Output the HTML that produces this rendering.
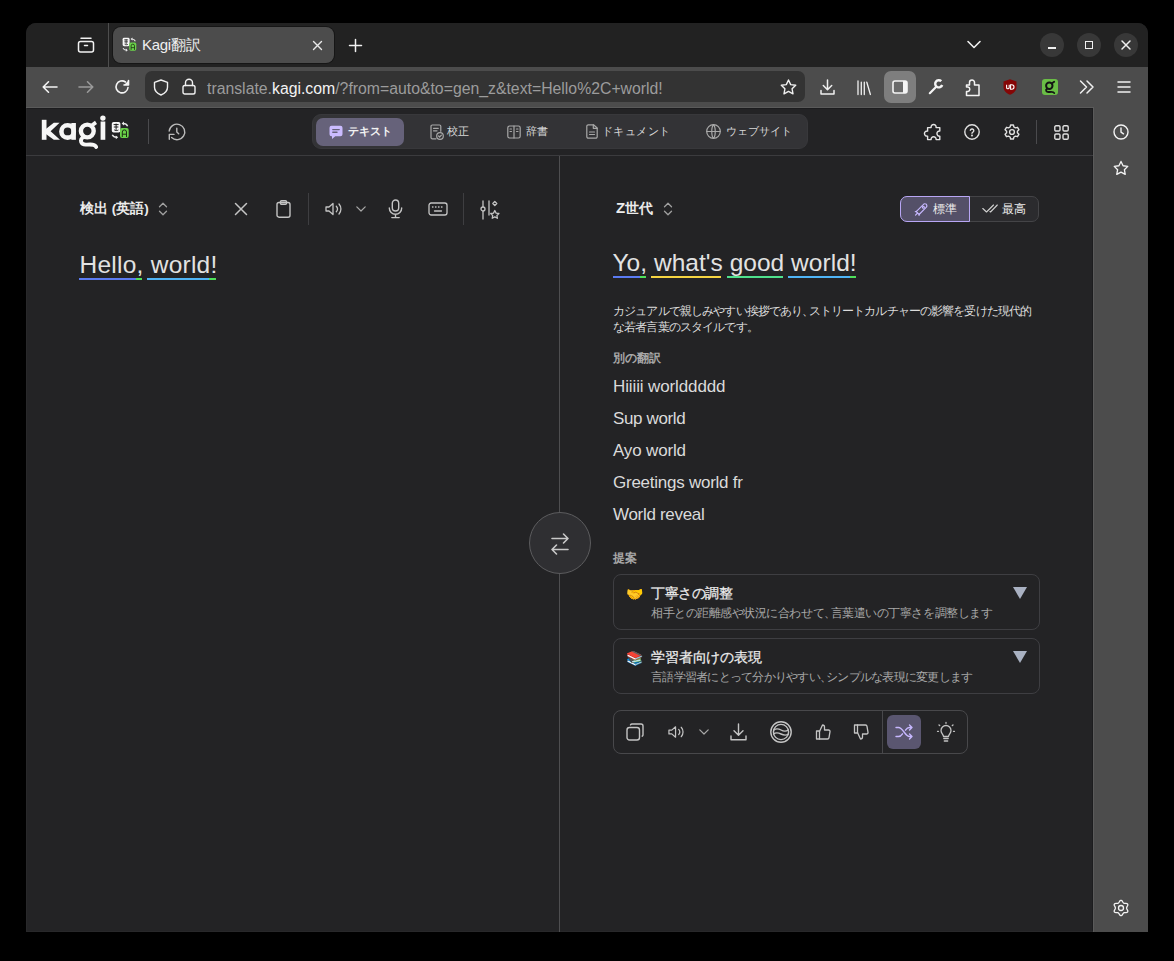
<!DOCTYPE html>
<html><head><meta charset="utf-8">
<style>
*{margin:0;padding:0;box-sizing:border-box}
html,body{width:1174px;height:961px;background:#000;overflow:hidden}
body{font-family:"Liberation Sans",sans-serif;color:#e6e6e6;position:relative}
.a{position:absolute}
svg{display:block;overflow:visible}
.ic{stroke:currentColor;fill:none;stroke-width:1.5;stroke-linecap:round;stroke-linejoin:round}
.t{white-space:nowrap;line-height:1}
</style></head><body>
<!-- window frame -->
<div class="a" style="left:26px;top:23px;width:1122px;height:909px;background:#232325;border-radius:10px 10px 0 0;overflow:hidden">
  <div class="a" style="left:0;top:0;width:1122px;height:44px;background:#222222"></div>
  <div class="a" style="left:0;top:44px;width:1122px;height:865px;background:#4c4c4c"></div>
  <div class="a" style="left:0;top:84px;width:1068px;height:825px;background:#232325;border-top:1px solid #5a5a5a;border-right:1px solid #5a5a5a"></div>
  <div class="a" style="left:0;top:85px;width:1067px;height:1px;background:#1c1c1e"></div>
  <div class="a" style="left:1066px;top:85px;width:1px;height:824px;background:#1c1c1e"></div>
</div>

<div class="a" style="left:26px;top:108px;width:1px;height:824px;background:#28282a"></div>
<div class="a" style="left:26px;top:931px;width:1067px;height:1px;background:#28282a"></div>
<!-- TAB BAR -->
<div class="a" style="left:108px;top:23px;width:1px;height:44px;background:#4e4e4e"></div>
<!-- tab manager icon -->
<svg class="a ic" style="left:77px;top:37px;color:#f2f2f2" width="18" height="16" viewBox="0 0 18 16"><rect x="1.5" y="4.5" width="15" height="10.5" rx="2"/><path d="M4 1.2h10"/><path d="M7.5 8.5h3"/></svg>
<!-- active tab -->
<div class="a" style="left:113px;top:27px;width:221px;height:36px;background:#4c4c4c;border-radius:8px;box-shadow:0 0 0 1px #161616"></div>
<!-- favicon -->
<svg class="a" style="left:122px;top:37px" width="14.5" height="15" viewBox="73 11 18 18.6"><rect x="73.8" y="12" width="8.6" height="10.5" rx="1.8" fill="#f8f8f8"/><path d="M75.6 14.6h5M78.1 13.6v6.3M75.8 17h4.6M76.2 19.8c1 1 3 1 4.2.2" stroke="#1e1e1e" stroke-width="1" fill="none"/><rect x="82" y="17.9" width="8.7" height="10.1" rx="2" fill="#6ad24a"/><path d="M84.3 27v-5a2.1 2.1 0 0 1 4.2 0v5M84.3 24.2h4.2" stroke="#1d2e14" stroke-width="1" fill="none"/><path d="M89.6 16.2Q88.4 13.4 85 13.5" stroke="#e8e8e8" stroke-width="1.4" fill="none"/><polygon points="83.6,13.5 86,11.6 86,15.4" fill="#e8e8e8"/><path d="M74.3 24.8Q75.4 27.4 78.8 27.3" stroke="#e8e8e8" stroke-width="1.4" fill="none"/><polygon points="80.2,27.3 77.8,25.4 77.8,29.2" fill="#e8e8e8"/></svg>
<div class="a t" style="left:142px;top:37px;font-size:15px;letter-spacing:-0.3px;color:#f0f0f0">Kagi翻訳</div>
<svg class="a ic" style="left:313px;top:41px;color:#e8e8e8;stroke-width:1.4" width="9" height="9" viewBox="0 0 9 9"><path d="M.5 .5l8 8M8.5 .5l-8 8"/></svg>
<svg class="a ic" style="left:349px;top:39px;color:#f2f2f2;stroke-width:1.5" width="13" height="13" viewBox="0 0 13 13"><path d="M6.5 .5v12M.5 6.5h12"/></svg>
<!-- list all tabs chevron -->
<svg class="a ic" style="left:967px;top:40px;color:#f0f0f0;stroke-width:1.6" width="14" height="9" viewBox="0 0 14 9"><path d="M1 1.5l6 6 6-6"/></svg>
<!-- window controls -->
<div class="a" style="left:1040px;top:33px;width:24px;height:24px;border-radius:50%;background:#383838"></div>
<div class="a" style="left:1077px;top:33px;width:24px;height:24px;border-radius:50%;background:#383838"></div>
<div class="a" style="left:1114px;top:33px;width:24px;height:24px;border-radius:50%;background:#383838"></div>
<div class="a" style="left:1048px;top:47px;width:8px;height:1.5px;background:#f0f0f0"></div>
<div class="a" style="left:1085px;top:41px;width:8px;height:8px;border:1.5px solid #f0f0f0"></div>
<svg class="a ic" style="left:1122px;top:41px;color:#f0f0f0;stroke-width:1.5" width="8" height="8" viewBox="0 0 8 8"><path d="M0 0l8 8M8 0l-8 8"/></svg>

<!-- NAV BAR -->
<svg class="a ic" style="left:42px;top:81px;color:#f4f4f4;stroke-width:1.6" width="16" height="12" viewBox="0 0 16 12"><path d="M15 6H1.2M6.5 0.8L1.2 6l5.3 5.2"/></svg>
<svg class="a ic" style="left:78px;top:81px;color:#9a9a9a;stroke-width:1.6" width="16" height="12" viewBox="0 0 16 12"><path d="M1 6h13.8M9.5 0.8L14.8 6l-5.3 5.2"/></svg>
<svg class="a ic" style="left:114px;top:79px;color:#f4f4f4;stroke-width:1.6" width="16" height="16" viewBox="0 0 16 16"><path d="M14 8.5A6 6 0 1 1 11.5 3"/><path d="M14.5 1.5v4.5H10" fill="#f4f4f4"/></svg>
<!-- url bar -->
<div class="a" style="left:145px;top:71px;width:660px;height:31px;background:#333333;border-radius:7px"></div>
<svg class="a ic" style="left:153px;top:79px;color:#f0f0f0;stroke-width:1.4" width="16" height="17" viewBox="0 0 16 17"><path d="M8 1L1.5 3.3v5C1.5 12 4.5 14.6 8 16c3.5-1.4 6.5-4 6.5-7.7v-5z"/></svg>
<svg class="a ic" style="left:182px;top:78px;color:#f0f0f0;stroke-width:1.4" width="14" height="17" viewBox="0 0 14 17"><rect x="1" y="7.5" width="12" height="8.5" rx="1.8"/><path d="M3.5 7.5V4.8a3.5 3.5 0 0 1 7 0v2.7"/></svg>
<div class="a t" style="left:207px;top:80.5px;font-size:15.8px;color:#9c9c9c">translate.<span style="color:#f4f4f4">kagi.com</span>/?from=auto&amp;to=gen_z&amp;text=Hello%2C+world!</div>
<svg class="a ic" style="left:780px;top:79px;color:#f0f0f0;stroke-width:1.4" width="17" height="16" viewBox="0 0 17 16"><path d="M8.5 1l2.2 4.6 5 .7-3.6 3.5.9 5-4.5-2.4-4.5 2.4.9-5L1.3 6.3l5-.7z"/></svg>
<!-- toolbar icons -->
<svg class="a ic" style="left:820px;top:79px;color:#f0f0f0;stroke-width:1.5" width="15" height="16" viewBox="0 0 15 16"><path d="M7.5 1v9.5M3.3 6.5l4.2 4.2 4.2-4.2M1 11.5v3.5h13v-3.5"/></svg>
<svg class="a ic" style="left:857px;top:80px;color:#f0f0f0;stroke-width:1.3" width="15" height="15" viewBox="0 0 15 15"><path d="M1 1v13.5M4.3 2.2v12.3M7.3 2.2v12.3M9.8 2.2l3.6 12.3"/></svg>
<div class="a" style="left:884px;top:71px;width:32px;height:32px;background:#7e7e7e;border-radius:7px"></div>
<svg class="a" style="left:892px;top:80px" width="16" height="14" viewBox="0 0 16 14"><rect x="1" y="1" width="14" height="12" rx="2" fill="#6a6a6a"/><rect x="11" y="1" width="4" height="12" fill="#f4f4f4"/><rect x="1" y="1" width="14" height="12" rx="2" fill="none" stroke="#f4f4f4" stroke-width="1.6"/></svg>
<svg class="a" style="left:928px;top:79px" width="16" height="16" viewBox="0 0 16 16"><path d="M1.8 14.2L8 8" stroke="#f4f4f4" stroke-width="2.2" stroke-linecap="round"/><path d="M13.3 2.2A3.6 3.6 0 1 0 14.2 6" fill="none" stroke="#f4f4f4" stroke-width="2.4"/></svg>
<svg class="a ic" style="left:964px;top:77px;color:#f4f4f4;stroke-width:1.5" width="17" height="20" viewBox="0 0 17 20"><path d="M5.5 8V5.5A2.5 2.5 0 0 1 10.5 5.5V8H15V18.5H2.5V14.5H4A2.3 2.3 0 0 0 4 10H2.5V8Z"/></svg>
<svg class="a" style="left:1003px;top:79px" width="14" height="16" viewBox="0 0 14 16"><path d="M7 .3L.5 2.6v5.2C.5 11.8 3.5 14.5 7 15.8c3.5-1.3 6.5-4 6.5-8V2.6z" fill="#850606"/><path d="M3.6 5.8v2.6a1.3 1.3 0 0 0 2.6 0V5.8M7.6 5.8h1.2a2.2 2.2 0 0 1 0 4.4H7.6z" fill="none" stroke="#fff" stroke-width="1.1"/></svg>
<svg class="a" style="left:1042px;top:79px" width="16" height="16" viewBox="0 0 16 16"><rect x="0" y="0" width="16" height="16" rx="3" fill="#6abd46"/><circle cx="7.3" cy="6.8" r="3.2" fill="none" stroke="#141414" stroke-width="2"/><path d="M10 4.3l2.2-1.6" stroke="#141414" stroke-width="1.8" stroke-linecap="round"/><path d="M5.2 9.6C3.2 10.8 4 13.3 7 13s4.6-.6 5.2 1" fill="none" stroke="#141414" stroke-width="1.9" stroke-linecap="round"/></svg>

<svg class="a ic" style="left:1079px;top:80px;color:#f0f0f0;stroke-width:1.5" width="16" height="14" viewBox="0 0 16 14"><path d="M1.5 1l6 6-6 6M8 1l6 6-6 6"/></svg>
<svg class="a ic" style="left:1117px;top:81px;color:#f0f0f0;stroke-width:1.5" width="14" height="12" viewBox="0 0 14 12"><path d="M1 1h12M1 6h12M1 11h12"/></svg>

<!-- SIDEBAR icons -->
<svg class="a ic" style="left:1113px;top:124px;color:#f4f4f4;stroke-width:1.4" width="16" height="16" viewBox="0 0 16 16"><circle cx="8" cy="8" r="7"/><path d="M8 4v4.2l2.5 1.6"/></svg>
<svg class="a ic" style="left:1113px;top:160px;color:#f4f4f4;stroke-width:1.4" width="16" height="16" viewBox="0 0 17 16"><path d="M8.5 1l2.2 4.6 5 .7-3.6 3.5.9 5-4.5-2.4-4.5 2.4.9-5L1.3 6.3l5-.7z"/></svg>
<svg class="a ic" style="left:1113px;top:900px;color:#f4f4f4;stroke-width:1.3" width="16" height="16" viewBox="0 0 16 16"><path d="M8.00 0.30 L8.50 0.42 L8.96 0.74 L9.35 1.24 L9.66 1.82 L9.96 2.22 L10.24 2.60 L10.51 2.91 L10.81 3.13 L11.16 3.28 L11.56 3.36 L12.02 3.41 L12.53 3.47 L13.19 3.45 L13.81 3.54 L14.32 3.78 L14.67 4.15 L14.82 4.64 L14.76 5.20 L14.53 5.78 L14.18 6.34 L13.98 6.81 L13.80 7.24 L13.67 7.63 L13.62 8.00 L13.67 8.37 L13.80 8.76 L13.98 9.19 L14.18 9.66 L14.53 10.22 L14.76 10.80 L14.82 11.36 L14.67 11.85 L14.32 12.22 L13.81 12.46 L13.19 12.55 L12.53 12.53 L12.02 12.59 L11.56 12.64 L11.16 12.72 L10.81 12.87 L10.51 13.09 L10.24 13.40 L9.96 13.78 L9.66 14.18 L9.35 14.76 L8.96 15.26 L8.50 15.58 L8.00 15.70 L7.50 15.58 L7.04 15.26 L6.65 14.76 L6.34 14.18 L6.04 13.78 L5.76 13.40 L5.49 13.09 L5.19 12.87 L4.84 12.72 L4.44 12.64 L3.98 12.59 L3.47 12.53 L2.81 12.55 L2.19 12.46 L1.68 12.22 L1.33 11.85 L1.18 11.36 L1.24 10.80 L1.47 10.22 L1.82 9.66 L2.02 9.19 L2.20 8.76 L2.33 8.37 L2.38 8.00 L2.33 7.63 L2.20 7.24 L2.02 6.81 L1.82 6.34 L1.47 5.78 L1.24 5.20 L1.18 4.64 L1.33 4.15 L1.68 3.78 L2.19 3.54 L2.81 3.45 L3.47 3.47 L3.98 3.41 L4.44 3.36 L4.84 3.28 L5.19 3.13 L5.49 2.91 L5.76 2.60 L6.04 2.22 L6.34 1.82 L6.65 1.24 L7.04 0.74 L7.50 0.42Z"/><circle cx="8" cy="8" r="2.5"/></svg>

<!-- PAGE CONTENT -->

<!-- HEADER -->
<div class="a" style="left:26px;top:155px;width:1067px;height:1px;background:#3b3b3e"></div>
<svg class="a" style="left:38px;top:110px" width="100" height="42" viewBox="0 0 100 42" fill="#f6f6f6">
<rect x="3.8" y="9.8" width="4.7" height="20"/>
<polygon points="7.5,19.3 15.8,12.8 21.6,12.8 12.6,21.2 22,29.8 15.8,29.8 7.5,23.8"/>
<circle cx="29.6" cy="21.4" r="6.2" fill="none" stroke="#f6f6f6" stroke-width="4.6"/>
<rect x="33.3" y="13" width="4.6" height="16.8"/>
<circle cx="49.3" cy="21" r="6.4" fill="none" stroke="#f6f6f6" stroke-width="4.4"/>
<path d="M52 14.5 L57 10.8 L59 14 L55 17z"/>
<path d="M45.8 26.8 C41 29.5, 42.5 35, 48.5 34.6 C53 34.3, 57 34, 58.2 37" fill="none" stroke="#f6f6f6" stroke-width="3.8" stroke-linecap="round"/>
<rect x="62.6" y="11.5" width="4.7" height="18.3"/>
<circle cx="64.9" cy="8.1" r="2.7"/>
<rect x="73.8" y="12" width="8.6" height="10.5" rx="1.8" fill="#f8f8f8"/>
<path d="M75.6 14.6h5M78.1 13.6v6.3M75.8 17h4.6M76.2 19.8c1 1 3 1 4.2.2" stroke="#1e1e1e" stroke-width="1" fill="none"/>
<rect x="82" y="17.9" width="8.7" height="10.1" rx="2" fill="#6ad24a"/>
<path d="M84.3 27v-5a2.1 2.1 0 0 1 4.2 0v5M84.3 24.2h4.2" stroke="#1d2e14" stroke-width="1" fill="none"/>
<path d="M89.6 16.2Q88.4 13.4 85 13.5" stroke="#e8e8e8" stroke-width="1.4" fill="none"/>
<polygon points="83.6,13.5 86,11.6 86,15.4" fill="#e8e8e8"/>
<path d="M74.3 24.8Q75.4 27.4 78.8 27.3" stroke="#e8e8e8" stroke-width="1.4" fill="none"/>
<polygon points="80.2,27.3 77.8,25.4 77.8,29.2" fill="#e8e8e8"/>
</svg>
<div class="a" style="left:148px;top:119px;width:1px;height:25px;background:#4a4a4d"></div>
<svg class="a ic" style="left:160px;top:115px;color:#bcbcbc;stroke-width:1.4" width="35" height="35" viewBox="0 0 35 35"><path d="M9.2 16A7.8 7.8 0 1 1 11.6 22.6"/><path d="M9.3 24.2V19.4H14"/><path d="M16.8 13.3v3.8l1.9 1.7"/></svg>

<!-- mode tabs -->
<div class="a" style="left:312px;top:114px;width:496px;height:35px;background:#333336;border:1px solid #38383b;border-radius:9px"></div>
<div class="a" style="left:316px;top:118px;width:88px;height:28px;background:#66627a;border-radius:7px"></div>
<svg class="a" style="left:329px;top:125px" width="14" height="15" viewBox="0 0 14 15"><path d="M2.5 0.8h9a2 2 0 0 1 2 2v6.5a2 2 0 0 1-2 2H6.3L3 14v-2.7h-.5a2 2 0 0 1-2-2V2.8a2 2 0 0 1 2-2z" fill="#cbbcff"/><path d="M3.8 4.6h6.4M3.8 7.2h4.2" stroke="#66627a" stroke-width="1.4" stroke-linecap="round"/></svg>
<div class="a t" style="left:348px;top:125.5px;font-size:11px;letter-spacing:0.15px;font-weight:bold;color:#f2f2f2">テキスト</div>
<svg class="a ic" style="left:430px;top:124px;color:#a8a8a8;stroke-width:1.2" width="14" height="16" viewBox="0 0 14 16"><path d="M6 14.8H2.3a1.3 1.3 0 0 1-1.3-1.3V2.3A1.3 1.3 0 0 1 2.3 1h7.2a1.3 1.3 0 0 1 1.3 1.3v5"/><path d="M3.5 4.3h4.8M3.5 6.8h3.5"/><circle cx="10" cy="12" r="3.3"/><path d="M8.6 12l1 1 1.8-1.8"/></svg>
<div class="a t" style="left:447px;top:125.5px;font-size:11px;color:#d8d8d8">校正</div>
<svg class="a ic" style="left:507px;top:125px;color:#a8a8a8;stroke-width:1.2" width="14" height="14" viewBox="0 0 14 14"><rect x="0.8" y="1" width="12.4" height="12" rx="1.8"/><path d="M7 1v12M3 4h1.5M3 6.5h1.5M9.5 4H11M9.5 6.5H11"/></svg>
<div class="a t" style="left:526px;top:125.5px;font-size:11px;letter-spacing:-0.3px;color:#d8d8d8">辞書</div>
<svg class="a ic" style="left:586px;top:124px;color:#a8a8a8;stroke-width:1.2" width="12" height="15" viewBox="0 0 12 15"><path d="M7.5 0.8H2.3A1.5 1.5 0 0 0 .8 2.3v10.4a1.5 1.5 0 0 0 1.5 1.5h7.4a1.5 1.5 0 0 0 1.5-1.5V4z"/><path d="M7.3 .8V4.3h3.9M3.5 8h5M3.5 10.5h5"/></svg>
<div class="a t" style="left:601.5px;top:125.5px;font-size:11px;letter-spacing:0.6px;color:#d8d8d8">ドキュメント</div>
<svg class="a ic" style="left:706px;top:124px;color:#a8a8a8;stroke-width:1.2" width="15" height="15" viewBox="0 0 15 15"><circle cx="7.5" cy="7.5" r="6.8"/><path d="M.7 7.5h13.6M7.5 .7c-2.3 2-2.3 11.6 0 13.6M7.5 .7c2.3 2 2.3 11.6 0 13.6"/></svg>
<div class="a t" style="left:725.5px;top:125.5px;font-size:11px;letter-spacing:0.1px;color:#d8d8d8">ウェブサイト</div>

<!-- header right icons -->
<svg class="a ic" style="left:918px;top:118px;color:#e4e4e4;stroke-width:1.4" width="30" height="28" viewBox="0 0 30 28"><path d="M9.6 9.6H13.1C12.6 5.4 18.6 5.4 18.1 9.6H21.8V13.1C18 12.6 18 18.6 21.8 18.1V21.6H18.1C18.6 17.8 12.6 17.8 13.1 21.6H9.6V18.1C5.4 18.6 5.4 12.6 9.6 13.1Z"/></svg>
<svg class="a ic" style="left:964px;top:124px;color:#e0e0e0;stroke-width:1.4" width="16" height="16" viewBox="0 0 16 16"><circle cx="8" cy="8" r="7.2"/><path d="M6.3 6.2a1.8 1.8 0 0 1 3.5.6c0 1.2-1.8 1.6-1.8 2.4"/><circle cx="8" cy="11.5" r=".4" fill="#e0e0e0"/></svg>
<svg class="a ic" style="left:1004px;top:124px;color:#e0e0e0;stroke-width:1.4" width="16" height="16" viewBox="0 0 16 16"><path d="M6.6 1h2.8l.5 2 1.6.9 2-.6 1.4 2.4-1.5 1.5v1.6l1.5 1.5-1.4 2.4-2-.6-1.6.9-.5 2H6.6l-.5-2-1.6-.9-2 .6L1.1 10.3l1.5-1.5V7.2L1.1 5.7l1.4-2.4 2 .6 1.6-.9z"/><circle cx="8" cy="8" r="2.4"/></svg>
<div class="a" style="left:1036px;top:120px;width:1px;height:24px;background:#4a4a4d"></div>
<svg class="a ic" style="left:1053.5px;top:124.5px;color:#e0e0e0;stroke-width:1.4" width="15" height="15" viewBox="0 0 15 15"><rect x=".8" y=".8" width="5.2" height="5.2" rx="1.2"/><rect x="9" y=".8" width="5.2" height="5.2" rx="1.2"/><rect x=".8" y="9" width="5.2" height="5.2" rx="1.2"/><rect x="9" y="9" width="5.2" height="5.2" rx="1.2"/></svg>

<!-- center divider + swap -->
<div class="a" style="left:559px;top:156px;width:1px;height:776px;background:#4e4e50"></div>
<div class="a" style="left:529px;top:512px;width:62px;height:62px;border-radius:50%;background:#2f2f32;border:1.5px solid #5c5c5e"></div>
<svg class="a ic" style="left:551px;top:533px;color:#c8c8c8;stroke-width:1.6" width="18" height="22" viewBox="0 0 18 22"><path d="M1 5.5h16M12.5 1l4.5 4.5-4.5 4.5M17 16.5H1M5.5 12L1 16.5 5.5 21"/></svg>

<!-- LEFT PANEL -->
<div class="a t" style="left:80px;top:202px;font-size:13.5px;font-weight:bold;color:#ececec">検出 (英語)</div>
<svg class="a ic" style="left:158px;top:202px;color:#a0a0a0;stroke-width:1.3" width="10" height="14" viewBox="0 0 10 14"><path d="M1.5 4.8L5 1.3l3.5 3.5M1.5 9.2L5 12.7l3.5-3.5"/></svg>
<svg class="a ic" style="left:235px;top:203px;color:#c4c4c4;stroke-width:1.5" width="12" height="12" viewBox="0 0 12 12"><path d="M.5 .5l11 11M11.5 .5l-11 11"/></svg>
<svg class="a ic" style="left:276px;top:200px;color:#c4c4c4;stroke-width:1.4" width="15" height="18" viewBox="0 0 15 18"><rect x="1" y="2.5" width="13" height="14.7" rx="2"/><rect x="4.5" y="0.8" width="6" height="3.4" rx="1"/></svg>
<div class="a" style="left:308px;top:193px;width:1px;height:32px;background:#3e3e41"></div>
<svg class="a ic" style="left:325px;top:202px;color:#c4c4c4;stroke-width:1.3" width="18" height="14" viewBox="0 0 18 14"><path d="M8 1.5L4 5H1v4h3l4 3.5z"/><path d="M11.3 4.3a4 4 0 0 1 0 5.4M14 2a7.5 7.5 0 0 1 0 10"/></svg>
<svg class="a ic" style="left:356px;top:206px;color:#a8a8a8;stroke-width:1.2" width="10" height="6" viewBox="0 0 10 6"><path d="M.8 .8L5 5 9.2 .8"/></svg>
<svg class="a ic" style="left:388px;top:199px;color:#c4c4c4;stroke-width:1.4" width="15" height="20" viewBox="0 0 15 20"><rect x="4.3" y="1" width="6.4" height="11" rx="3.2"/><path d="M1.3 9a6.2 6.2 0 0 0 12.4 0M7.5 15.3v3M3.8 18.6h7.4"/></svg>
<svg class="a ic" style="left:428px;top:202px;color:#c4c4c4;stroke-width:1.3" width="20" height="14" viewBox="0 0 20 14"><rect x="1" y="1" width="18" height="12" rx="2.2"/><path d="M4.5 5h.5M7.5 5h.5M10.5 5h.5M13.5 5h.5M6.5 9h7"/></svg>
<div class="a" style="left:463px;top:193px;width:1px;height:32px;background:#3e3e41"></div>
<svg class="a ic" style="left:480px;top:200px;color:#c4c4c4;stroke-width:1.3" width="20" height="20" viewBox="0 0 20 20"><path d="M3 1v18M9 1v14"/><circle cx="3" cy="9" r="2" fill="#232325"/><path d="M14.8 1.5l2 2-2 2-2-2z"/><path d="M14.8 10.5l1.3 2.6 2.8.4-2 2 .5 2.8-2.6-1.4-2.6 1.4.5-2.8-2-2 2.8-.4z"/></svg>

<div class="a t" style="left:79.5px;top:252.5px;font-size:24.5px;letter-spacing:0.25px;color:#e2e2e2">Hello, world!</div>
<div class="a" style="left:79px;top:278px;width:57px;height:2px;background:#5b7bf2"></div>
<div class="a" style="left:136px;top:278px;width:6px;height:2px;background:#4ee05a"></div>
<div class="a" style="left:147px;top:278px;width:62px;height:2px;background:#4fb4f6"></div>
<div class="a" style="left:209px;top:278px;width:7px;height:2px;background:#4ee05a"></div>

<!-- RIGHT PANEL -->
<div class="a t" style="left:616px;top:200px;font-size:13.5px;font-weight:bold;color:#ececec"><span style="font-size:15px">Z</span>世代</div>
<svg class="a ic" style="left:663px;top:202px;color:#a0a0a0;stroke-width:1.3" width="10" height="14" viewBox="0 0 10 14"><path d="M1.5 4.8L5 1.3l3.5 3.5M1.5 9.2L5 12.7l3.5-3.5"/></svg>

<div class="a" style="left:900px;top:196px;width:139px;height:26px;border:1px solid #444447;border-radius:7px;background:#2b2b2e"></div>
<div class="a" style="left:900px;top:196px;width:70px;height:26px;border:1.5px solid #b8a6f5;border-radius:7px 0 0 7px;background:#545068"></div>
<svg class="a ic" style="left:913px;top:202px;color:#c7b8ff;stroke-width:1.1" width="15" height="15" viewBox="0 0 15 15"><path d="M3.2 9.6L10 2.8a2.6 2.6 0 0 1 3.4-.5 2.6 2.6 0 0 1-.5 3.4L6.1 12.5z"/><circle cx="10.4" cy="5.3" r="1"/><path d="M4.6 11L2.5 13.2M3.5 9.3l-1.3.4M6.4 12.2l-.4 1.3"/></svg>
<div class="a t" style="left:933px;top:203px;font-size:12px;color:#ececec">標準</div>
<svg class="a ic" style="left:982px;top:204px;color:#d0d0d0;stroke-width:1.1" width="16" height="9" viewBox="0 0 16 9"><path d="M.8 4.5L4.5 8 11.5 1M8 7.5l.5.5L15.3 1"/></svg>
<div class="a t" style="left:1002px;top:203px;font-size:12px;color:#ececec">最高</div>

<div class="a t" style="left:612.5px;top:251px;font-size:24.5px;letter-spacing:0.03px;color:#e2e2e2">Yo, what's good world!</div>
<div class="a" style="left:613px;top:276px;width:27px;height:2px;background:#5b7bf2"></div>
<div class="a" style="left:640px;top:276px;width:6px;height:2px;background:#4ee05a"></div>
<div class="a" style="left:651px;top:276px;width:70px;height:2px;background:#f5d442"></div>
<div class="a" style="left:727px;top:276px;width:56px;height:2px;background:#4fe08c"></div>
<div class="a" style="left:788px;top:276px;width:62px;height:2px;background:#4fb4f6"></div>
<div class="a" style="left:850px;top:276px;width:6px;height:2px;background:#4ee05a"></div>

<div class="a" style="left:613px;top:303px;white-space:nowrap;font-size:12px;line-height:16px;letter-spacing:-0.86px;color:#dcdcdc">カジュアルで親しみやすい挨拶であり<span style="letter-spacing:-5.86px">、</span>ストリートカルチャーの影響を受けた現代的<br>な若者言葉のスタイルです。</div>
<div class="a t" style="left:613px;top:352px;font-size:12px;font-weight:bold;color:#a8a8a8">別の翻訳</div>
<div class="a t" style="left:613px;top:377.6px;font-size:17px;letter-spacing:-0.12px;color:#dadada">Hiiiii worlddddd</div>
<div class="a t" style="left:613px;top:409.6px;font-size:17px;letter-spacing:-0.37px;color:#dadada">Sup world</div>
<div class="a t" style="left:613px;top:441.6px;font-size:17px;letter-spacing:-0.16px;color:#dadada">Ayo world</div>
<div class="a t" style="left:613px;top:473.6px;font-size:17px;letter-spacing:-0.25px;color:#dadada">Greetings world fr</div>
<div class="a t" style="left:613px;top:505.6px;font-size:17px;letter-spacing:-0.31px;color:#dadada">World reveal</div>
<div class="a t" style="left:613px;top:552px;font-size:12px;font-weight:bold;color:#a8a8a8">提案</div>

<!-- suggestion cards -->
<div class="a" style="left:613px;top:574px;width:427px;height:56px;border:1px solid #3e3e42;border-radius:8px"></div>
<div class="a t" style="left:626px;top:587px;font-size:14px">🤝</div>
<div class="a t" style="left:651px;top:586px;font-size:14px;letter-spacing:-0.43px;color:#ececec;-webkit-text-stroke:0.25px #ececec">丁寧さの調整</div>
<div class="a t" style="left:651px;top:607px;font-size:12px;letter-spacing:-0.46px;color:#a8a8a8">相手との距離感や状況に合わせて<span style="letter-spacing:-5.46px">、</span>言葉遣いの丁寧さを調整します</div>
<svg class="a" style="left:1013px;top:587px" width="14" height="12" viewBox="0 0 14 12"><path d="M0 0h14L7 12z" fill="#a9b1c2"/></svg>

<div class="a" style="left:613px;top:638px;width:427px;height:56px;border:1px solid #3e3e42;border-radius:8px"></div>
<div class="a t" style="left:626px;top:651px;font-size:14px">📚</div>
<div class="a t" style="left:651px;top:650px;font-size:14px;letter-spacing:-0.14px;color:#ececec;-webkit-text-stroke:0.25px #ececec">学習者向けの表現</div>
<div class="a t" style="left:651px;top:671px;font-size:12px;letter-spacing:-0.75px;color:#a8a8a8">言語学習者にとって分かりやすい<span style="letter-spacing:-5.75px">、</span>シンプルな表現に変更します</div>
<svg class="a" style="left:1013px;top:651px" width="14" height="12" viewBox="0 0 14 12"><path d="M0 0h14L7 12z" fill="#a9b1c2"/></svg>

<!-- action toolbar -->
<div class="a" style="left:613px;top:710px;width:355px;height:44px;border:1px solid #48484b;border-radius:8px"></div>
<div class="a" style="left:882px;top:710px;width:1px;height:44px;background:#48484b"></div>
<svg class="a ic" style="left:626px;top:723px;color:#c4c4c4;stroke-width:1.4" width="18" height="18" viewBox="0 0 18 18"><rect x="1" y="4.5" width="12.5" height="12.5" rx="2.5"/><path d="M4.5 1.8A1.8 1.8 0 0 1 6.3 1H15a2 2 0 0 1 2 2v8.7a1.8 1.8 0 0 1-.8 1.5"/></svg>
<svg class="a ic" style="left:668px;top:725px;color:#c4c4c4;stroke-width:1.3" width="17" height="14" viewBox="0 0 18 14"><path d="M8 1.5L4 5H1v4h3l4 3.5z"/><path d="M11.3 4.3a4 4 0 0 1 0 5.4M14 2a7.5 7.5 0 0 1 0 10"/></svg>
<svg class="a ic" style="left:699px;top:729px;color:#a8a8a8;stroke-width:1.2" width="10" height="6" viewBox="0 0 10 6"><path d="M.8 .8L5 5 9.2 .8"/></svg>
<svg class="a ic" style="left:730px;top:723px;color:#c4c4c4;stroke-width:1.4" width="17" height="18" viewBox="0 0 17 18"><path d="M8.5 1v11M4 7.8l4.5 4.5L13 7.8M1 13v3.8h15V13"/></svg>
<svg class="a ic" style="left:770px;top:721px;color:#c4c4c4;stroke-width:1.4" width="22" height="22" viewBox="0 0 22 22"><circle cx="11" cy="11" r="10.2"/><circle cx="11" cy="11" r="7.6"/><path d="M3.8 9c2.5-1.8 5-1.2 7.2 0s4.7 1.8 7.2 0M3.5 13c2.5-1.8 5-1.2 7.5 0s5 1.8 7.5 0"/></svg>
<svg class="a ic" style="left:814.5px;top:724px;color:#c4c4c4;stroke-width:1.3" width="16" height="16" viewBox="0 0 16 16"><path d="M4.5 7v8H1.5V7z"/><path d="M4.5 7.5l3-6.5a2 2 0 0 1 2 2V6h4a1.5 1.5 0 0 1 1.5 1.7l-1 6A1.5 1.5 0 0 1 12.5 15h-8"/></svg>
<svg class="a ic" style="left:853px;top:724px;color:#c4c4c4;stroke-width:1.3" width="16" height="16" viewBox="0 0 16 16"><g transform="translate(0 16) scale(1 -1)"><path d="M4.5 7v8H1.5V7z"/><path d="M4.5 7.5l3-6.5a2 2 0 0 1 2 2V6h4a1.5 1.5 0 0 1 1.5 1.7l-1 6A1.5 1.5 0 0 1 12.5 15h-8"/></g></svg>
<div class="a" style="left:887px;top:715px;width:34px;height:34px;background:#5a5670;border-radius:6px"></div>
<svg class="a ic" style="left:895px;top:724px;color:#c7b8ff;stroke-width:1.4" width="18" height="16" viewBox="0 0 18 16"><path d="M1 3.5h2.5c4.5 0 6.5 9 11 9H17M1 12.5h2.5c1.8 0 3-1.2 4-2.7M17 3.5h-2.5c-1.8 0-3 1.2-4 2.7M14.5 1L17 3.5 14.5 6M14.5 10L17 12.5 14.5 15"/></svg>
<svg class="a ic" style="left:937px;top:722px;color:#c4c4c4;stroke-width:1.3" width="18" height="20" viewBox="0 0 18 20"><path d="M6.8 16.5h4.4M7.3 19h3.4"/><path d="M6.5 14.5c0-2-2.5-3-2.5-6a5 5 0 0 1 10 0c0 3-2.5 4-2.5 6z"/><path d="M9 .5v.8M2 3l.7.6M16 3l-.7.6M.5 9.3h1M16.5 9.3h1"/></svg>

</body></html>
